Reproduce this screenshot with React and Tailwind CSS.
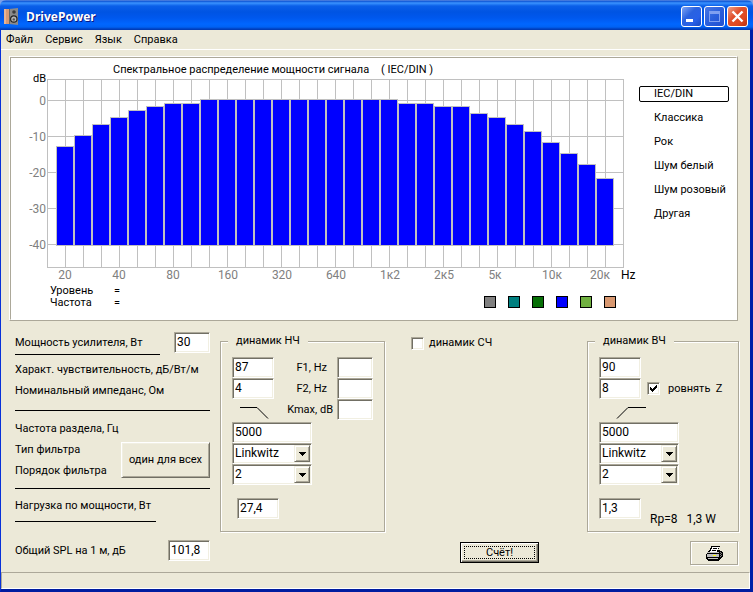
import { useState } from 'react'
import clsx from 'clsx'

const LEVELS = [
  -13, -10, -7, -5, -3, -2, -1, -1, 0, 0, 0, 0, 0, 0, 0, 0,
  0, 0, 0, -1, -1, -2, -2, -4, -5, -7, -9, -12, -15, -18, -22,
]

const FREQ_LABELS = [
  [65, '20'], [119, '40'], [173, '80'], [228, '160'], [282, '320'], [336, '640'],
  [390, '1к2'], [444, '2к5'], [495, '5к'], [552, '10к'], [600, '20к'],
]

const PRESETS = ['IEC/DIN', 'Классика', 'Рок', 'Шум белый', 'Шум розовый', 'Другая']

const SWATCHES = [
  ['серый', 'bg-[#808080]'],
  ['бирюзовый', 'bg-[#008080]'],
  ['зелёный', 'bg-[#077007]'],
  ['синий', 'bg-[#0000ff]'],
  ['салатовый', 'bg-[#70b040]'],
  ['персиковый', 'bg-[#d89870]'],
]

const sunken =
  'border border-[#aca899] border-r-white border-b-white bg-white shadow-[inset_1px_1px_0_#716f64,inset_-1px_-1px_0_#f1efe2] outline-none'

function Field({ className, ...props }) {
  return <input type="text" className={clsx(sunken, 'h-[21px] px-[2px] pb-[2px] text-[12px]', className)} {...props} />
}

function Select({ label, options }) {
  return (
    <div className="relative h-[21px] w-20">
      <select aria-label={label} className={clsx(sunken, 'h-full w-full appearance-none px-[2px] pb-[2px] text-[12px]')}>
        {options.map((o) => <option key={o}>{o}</option>)}
      </select>
      <span className="pointer-events-none absolute top-[2px] right-[2px] flex h-[17px] w-4 items-center justify-center border border-[#f1efe2] border-r-[#716f64] border-b-[#716f64] bg-[#ece9d8] shadow-[inset_1px_1px_0_#fff,inset_-1px_-1px_0_#aca899]">
        <svg width="7" height="4" shapeRendering="crispEdges"><path d="M0 0h7v1h-1v1h-1v1h-1v1h-1v-1h-1v-1h-1v-1h-1z" /></svg>
      </span>
    </div>
  )
}

function Check({ label, defaultChecked, className }) {
  return (
    <label className={clsx('flex items-center whitespace-pre', className)}>
      <span className="relative h-[13px] w-[13px]">
        <input type="checkbox" defaultChecked={defaultChecked} className={clsx(sunken, 'peer block h-[13px] w-[13px] appearance-none')} />
        <svg width="7" height="7" shapeRendering="crispEdges" className="pointer-events-none absolute top-[3px] left-[3px] hidden peer-checked:block">
          <path d="M0 2h1v1h1v1h1v-1h1v-1h1v-1h1v-1h1v3h-1v1h-1v1h-1v1h-1v1h-1v-1h-1v-1h-1z" />
        </svg>
      </span>
      {label}
    </label>
  )
}

function Group({ title, className, children }) {
  return (
    <fieldset className={clsx('min-w-0 border border-[#aca899] pb-3 pl-[11px] shadow-[1px_1px_0_#fff,inset_1px_1px_0_#fff]', className)}>
      <legend className="-ml-1 bg-[#ece9d8] px-2 leading-[14px]">{title}</legend>
      {children}
    </fieldset>
  )
}

function Filter() {
  return (
    <div className="mt-[2px] flex flex-col">
      <Field aria-label="Частота раздела" className="w-20" defaultValue="5000" />
      <Select label="Тип фильтра" options={['Linkwitz', 'Butterworth', 'Bessel']} />
      <Select label="Порядок фильтра" options={['2', '1', '3', '4']} />
    </div>
  )
}

function Chart({ preset }) {
  const columns = Array.from({ length: 33 }, (_, i) => 47 + i * 18)

  return (
    <svg width="626" height="226" viewBox="11 58 626 226" fontSize="12" className="block">
      <text x="113" y="73" fontSize="11">Спектральное распределение мощности сигнала</text>
      <text x="381" y="73" fontSize="11">( {preset} )</text>
      <text x="46" y="82" fontSize="11" textAnchor="end">dB</text>
      <g fill="#c0c0c0" shapeRendering="crispEdges">
        {columns.map((x) => <rect key={x} x={x} y="79" width="1" height="189" />)}
        {[79, 100, 136, 172, 208, 244, 267].map((y) => <rect key={y} x="47" y={y} width="577" height="1" />)}
      </g>
      <g shapeRendering="crispEdges">
        {LEVELS.map((level, i) => {
          const top = Math.round(99 - level * 3.6)
          const x = 56 + i * 18
          return (
            <g key={i}>
              <rect x={x} y={top} width="18" height={246 - top} fill="#c0c0c0" />
              <rect x={x + 1} y={top + 1} width="16" height={244 - top} fill="#0000ff" />
            </g>
          )
        })}
      </g>
      <g fill="#808080">
        {[0, -10, -20, -30, -40].map((v, i) => (
          <text key={v} x="46" y={105 + i * 36} textAnchor="end">{v}</text>
        ))}
        {FREQ_LABELS.map(([x, text]) => (
          <text key={text} x={x} y="279" textAnchor="middle">{text}</text>
        ))}
      </g>
      <text x="621" y="279">Hz</text>
    </svg>
  )
}

function SpeakerIcon() {
  return (
    <svg width="16" height="17" viewBox="0 0 16 17" className="ml-[3px]">
      <path d="M0 1h6v15H0z" fill="#d89a76" />
      <path d="M0 1h2v15H0z" fill="#e8b494" />
      <path d="M5 1l9-1v17l-9-1z" fill="#8a8a8a" />
      <path d="M5 1h1v15H5z" fill="#666" />
      <circle cx="10" cy="4" r="1.8" fill="#3c3c3c" />
      <circle cx="9.8" cy="11" r="3.8" fill="#222" />
      <circle cx="9.8" cy="11" r="2.6" fill="#b4b4b4" />
      <circle cx="9.8" cy="11.4" r="1.2" fill="#555" />
    </svg>
  )
}

function PrinterIcon() {
  return (
    <svg width="17" height="15" viewBox="0 0 17 15" shapeRendering="crispEdges">
      <path d="M5 0h9v1h-1v2h-1v3h-9v-2h1v-2h1z" fill="#000" />
      <path d="M6 1h7v1h-1v2h-1v2h-7v-1h1v-2h1z" fill="#fff" />
      <path d="M7 2h4v1h-4zM6 4h4v1h-4z" fill="#000" />
      <path d="M2 5h2v1h8v-2h2v1h2v1h1v5h-1v1h-1v1h-1v1h-1v1h-11v-1h-1v-1h-1v-5h1v-1h1z" fill="#000" />
      <path d="M2 6h11v1h-12v-1z" fill="#c0c0c0" />
      <path d="M1 8h12v3h-12z" fill="#c0c0c0" />
      <path d="M14 6h1v1h-1zM14 8h1v1h-1zM15 7h1v1h-1zM14 10h1v1h-1zM15 9h1v1h-1z" fill="#808080" />
      <path d="M7 9h3v1h-3z" fill="#ffff00" />
      <path d="M2 12h10v1h-10z" fill="#c0c0c0" />
    </svg>
  )
}

function TitleBar() {
  const button = 'flex h-[21px] w-[21px] items-center justify-center rounded-[3px] border border-white'

  return (
    <header className="flex h-[30px] items-center rounded-t-md bg-[linear-gradient(#7ba0e8_0px,#0a4fd0_1px,#3a93ff_3px,#0a5fe8_6px,#0054e3_12px,#0058ee_18px,#0066ff_24px,#0062f4_27px,#0040c0_29px,#0038b0_30px)] pt-[3px] pr-[5px] pl-px">
      <SpeakerIcon />
      <h1 className="ml-[6px] flex-1 font-['Open_Sans',sans-serif] text-[12px] font-bold text-white [text-shadow:1px_1px_0_#0a1883]">DrivePower</h1>
      <div className="flex gap-[2px]">
        <button aria-label="Свернуть" className={clsx(button, 'bg-[linear-gradient(135deg,#7ea4f4,#2a62e0_40%,#2860e8_70%,#1848c0)]')}>
          <svg width="19" height="19" shapeRendering="crispEdges"><rect x="4" y="12" width="7" height="3" fill="#fff" /></svg>
        </button>
        <button aria-label="Развернуть" disabled className={clsx(button, 'border-[#6f97ee] bg-[linear-gradient(135deg,#4a78e4,#2a5fdc_50%,#2050d0)]')}>
          <svg width="19" height="19" shapeRendering="crispEdges" fill="none">
            <rect x="4.5" y="4.5" width="10" height="10" stroke="#7f9ff0" />
            <rect x="4" y="4" width="11" height="3" fill="#7f9ff0" />
          </svg>
        </button>
        <button aria-label="Закрыть" className={clsx(button, 'bg-[linear-gradient(135deg,#f0a088,#e0502c_40%,#e04820_70%,#b83010)]')}>
          <svg width="19" height="19" stroke="#fff" strokeWidth="2.4"><path d="M4.5 4.5l10 10M14.5 4.5l-10 10" /></svg>
        </button>
      </div>
    </header>
  )
}

export default function App() {
  const [preset, setPreset] = useState('IEC/DIN')

  return (
    <div className="bg-[#7ba0e8] font-[Roboto,sans-serif] text-[11px] leading-[14px] text-black">
      <TitleBar />
      <div className="border-r-3 border-b-3 border-l border-[#0831d9] border-r-[#0020a8] border-b-[#001ca0] bg-[#ece9d8]">
        <nav className="flex h-5 items-center gap-3 border-b border-white pl-[5px]">
          <a href="#file">Файл</a>
          <a href="#service">Сервис</a>
          <a href="#language">Язык</a>
          <a href="#help">Справка</a>
        </nav>

        <section className="mt-[6px] mr-3 ml-2 border border-white border-r-[#aca899] border-b-[#aca899]">
          <div className="flex border border-[#aca899] border-r-white border-b-white bg-white">
            <div>
              <Chart preset={preset} />
              <div className="flex h-[35px] items-start justify-between pr-[21px] pl-[39px]">
                <dl className="mt-px grid grid-cols-[64px_auto] leading-3">
                  <dt>Уровень</dt><dd>=</dd>
                  <dt>Частота</dt><dd>=</dd>
                </dl>
                <div className="mt-3 flex gap-3">
                  {SWATCHES.map(([name, color]) => (
                    <button key={name} aria-label={name} className={clsx('h-3 w-3 border border-black', color)} />
                  ))}
                </div>
              </div>
            </div>
            <div className="ml-[2px] flex flex-1 flex-col gap-2 pt-7 pr-[7px]">
              {PRESETS.map((name) => (
                <button
                  key={name}
                  onClick={() => setPreset(name)}
                  className={clsx(
                    'h-4 rounded-[2px] border pl-[14px] text-left leading-[14px] whitespace-nowrap',
                    name === preset ? 'border-black' : 'border-transparent'
                  )}
                >
                  {name}
                </button>
              ))}
            </div>
          </div>
        </section>

        <main className="flex gap-[10px] pt-[11px] pr-[11px] pb-[7px] pl-[14px]">
          <div className="flex w-[195px] flex-col">
            <div className="flex h-[21px] items-center justify-between">
              <label htmlFor="power">Мощность усилителя, Вт</label>
              <Field id="power" className="w-9" defaultValue="30" />
            </div>
            <hr className="mt-px w-[145px] border-black" />
            <p className="mt-1 leading-[21px] whitespace-nowrap">Характ. чувствительность, дБ/Вт/м</p>
            <p className="leading-[21px]">Номинальный импеданс, Ом</p>
            <hr className="mt-[9px] border-black" />
            <p className="mt-[7px] leading-[21px]">Частота раздела, Гц</p>
            <div className="flex items-center justify-between">
              <div className="leading-[21px]">
                <p>Тип фильтра</p>
                <p>Порядок фильтра</p>
              </div>
              <button className="h-9 w-[89px] border border-white border-r-[#716f64] border-b-[#716f64] whitespace-nowrap shadow-[inset_1px_1px_0_#f1efe2,inset_-1px_-1px_0_#aca899]">
                один для всех
              </button>
            </div>
            <hr className="mt-[7px] border-black" />
            <p className="mt-[6px] leading-[21px]">Нагрузка по мощности, Вт</p>
            <hr className="mt-[5px] w-[141px] border-black" />
            <div className="mt-[18px] flex h-[21px] items-center justify-between">
              <label htmlFor="spl">Общий SPL на 1 м, дБ</label>
              <Field id="spl" className="w-[42px]" defaultValue="101,8" />
            </div>
          </div>

          <div className="flex flex-1 flex-col">
            <div className="mt-[2px] flex items-start justify-between">
              <Group title="динамик НЧ" className="w-[165px]">
                <div className="mt-[9px] flex justify-between pr-[11px]">
                  <div className="flex flex-col">
                    <Field aria-label="Чувствительность НЧ" className="w-[42px]" defaultValue="87" />
                    <Field aria-label="Импеданс НЧ" className="w-[42px]" defaultValue="4" />
                    <svg width="42" height="21" fill="none" stroke="#000"><path d="M8 8.5h17l11 11" /></svg>
                  </div>
                  <div className="flex flex-col items-end">
                    <label className="flex items-center gap-[10px]">F1, Hz <Field className="w-9" /></label>
                    <label className="flex items-center gap-[10px]">F2, Hz <Field className="w-9" /></label>
                    <label className="flex items-center gap-1">Kmax, dB <Field className="w-9" /></label>
                  </div>
                </div>
                <Filter />
                <Field aria-label="Нагрузка НЧ" className="mt-[13px] ml-[5px] block w-[42px]" defaultValue="27,4" />
              </Group>

              <Check label="динамик СЧ" className="mt-[2px] mr-auto ml-[26px] gap-[5px]" />

              <Group title="динамик ВЧ" className="w-[152px]">
                <div className="mt-[9px] flex flex-col items-start">
                  <Field aria-label="Чувствительность ВЧ" className="w-[42px]" defaultValue="90" />
                  <div className="flex items-center">
                    <Field aria-label="Импеданс ВЧ" className="w-[42px]" defaultValue="8" />
                    <Check label="ровнять  Z" defaultChecked className="ml-[6px] gap-2" />
                  </div>
                  <svg width="60" height="21" fill="none" stroke="#000"><path d="M18 19.5l11-11h18" /></svg>
                </div>
                <Filter />
                <div className="mt-[13px] flex h-[21px] items-start">
                  <Field aria-label="Нагрузка ВЧ" className="w-[42px]" defaultValue="1,3" />
                  <span className="mt-[14px] ml-[9px] text-[12px] leading-[14px] whitespace-pre">Rp=8   1,3 W</span>
                </div>
              </Group>
            </div>

            <div className="mt-[9px] flex items-start justify-between pr-px pl-60">
              <button className="mt-px h-[21px] w-[79px] border border-black p-[3px] shadow-[inset_1px_1px_0_#fff,inset_-1px_-1px_0_#716f64,inset_-2px_-2px_0_#aca899]">
                <span className="flex h-[13px] items-center justify-center border border-dotted border-black">Счёт!</span>
              </button>
              <button aria-label="Печать" className="flex h-6 w-12 items-center justify-center border border-[#aca899] shadow-[1px_1px_0_#fff,inset_1px_1px_0_#fff]">
                <PrinterIcon />
              </button>
            </div>
          </div>
        </main>

        <footer className="h-[17px] border border-[#aca899] border-r-white border-b-white" />
      </div>
    </div>
  )
}
